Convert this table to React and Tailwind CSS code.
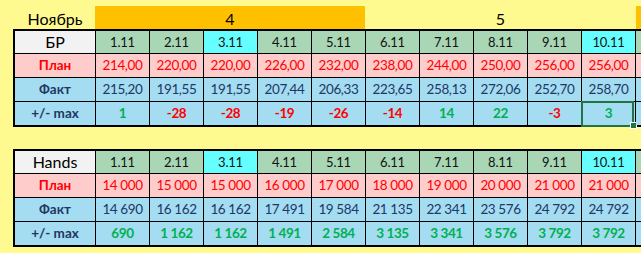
import React from 'react';

const dates = ['1.11', '2.11', '3.11', '4.11', '5.11', '6.11', '7.11', '8.11', '9.11', '10.11', ''];
const cyanCols = [2, 9];

const tables = [
  {
    name: 'БР',
    plan: ['214,00', '220,00', '220,00', '226,00', '232,00', '238,00', '244,00', '250,00', '256,00', '256,00', ''],
    fact: ['215,20', '191,55', '191,55', '207,44', '206,33', '223,65', '258,13', '272,06', '252,70', '258,70', ''],
    max: ['1', '-28', '-28', '-19', '-26', '-14', '14', '22', '-3', '3', ''],
    selected: 9,
  },
  {
    name: 'Hands',
    plan: ['14 000', '15 000', '15 000', '16 000', '17 000', '18 000', '19 000', '20 000', '21 000', '21 000', ''],
    fact: ['14 690', '16 162', '16 162', '17 491', '19 584', '21 135', '22 341', '23 576', '24 792', '24 792', ''],
    max: ['690', '1 162', '1 162', '1 491', '2 584', '3 135', '3 341', '3 576', '3 792', '3 792', ''],
    selected: -1,
  },
];

const Cell = ({ className, children }) => (
  <div className={`flex items-center justify-center whitespace-nowrap ${className}`}>{children}</div>
);

const Sheet = ({ data }) => (
  <div className="ml-[13px] w-max border-2 border-black bg-black grid grid-cols-[80px_repeat(11,53px)] grid-rows-[22px_23px_23px_23px] gap-px">
    {/* header row */}
    <Cell className="bg-[#f2f2f2] text-[16px] text-black">{data.name}</Cell>
    {dates.map((d, i) => (
      <Cell key={i} className={`text-[13px] tracking-[-0.2px] text-[#111] pt-px ${cyanCols.includes(i) ? 'bg-[#66ffff]' : 'bg-[#a9d6b5]'}`}>
        {d}
      </Cell>
    ))}

    {/* plan */}
    <Cell className="bg-[#ffcccc] text-[13.5px] font-bold text-[#ff0000]">План</Cell>
    {data.plan.map((v, i) => (
      <Cell key={i} className="bg-[#ffcccc] text-[13.5px] tracking-[-0.4px] text-[#ff0000]">{v}</Cell>
    ))}

    {/* fact */}
    <Cell className="bg-[#a4dcf2] text-[13.5px] font-bold text-[#203864]">Факт</Cell>
    {data.fact.map((v, i) => (
      <Cell key={i} className="bg-[#a4dcf2] text-[13.5px] tracking-[-0.4px] text-[#203864]">{v}</Cell>
    ))}

    {/* +/- max */}
    <Cell className="bg-[#a4dcf2] text-[13.5px] font-bold text-[#203864]">+/- max</Cell>
    {data.max.map((v, i) => (
      <Cell
        key={i}
        className={`relative bg-[#a4dcf2] text-[13.5px] tracking-[-0.4px] font-bold ${v.startsWith('-') ? 'text-[#ff0000]' : 'text-[#00b050]'}`}
      >
        {v}
        {i === data.selected && (
          <>
            <div className="absolute -left-px -top-px right-px -bottom-[2px] border-2 border-[#217346]" />
            <div className="absolute -right-[2px] -bottom-[4px] w-[7px] h-[7px] bg-[#217346] border border-white" />
          </>
        )}
      </Cell>
    ))}
  </div>
);

export default function App() {
  return (
    <div
      className="w-[641px] h-[253px] overflow-hidden bg-[#fffa8f] pt-[6px]"
      style={{ fontFamily: 'Lato, "Liberation Sans", sans-serif' }}
    >
      {/* month header */}
      <div className="flex h-[23px] text-[16px] text-black">
        <div className="w-[95px] pl-[15px] flex items-center justify-center pt-[3px]">Ноябрь</div>
        <div className="w-[270px] bg-[#ffc000] flex items-center justify-center pt-[3px]">4</div>
        <div className="w-[271px] flex items-center justify-center pt-[3px]">5</div>
        <div className="flex-1 bg-[#ffc000]" />
      </div>

      <Sheet data={tables[0]} />
      <div className="h-[22px]" />
      <Sheet data={tables[1]} />
    </div>
  );
}
